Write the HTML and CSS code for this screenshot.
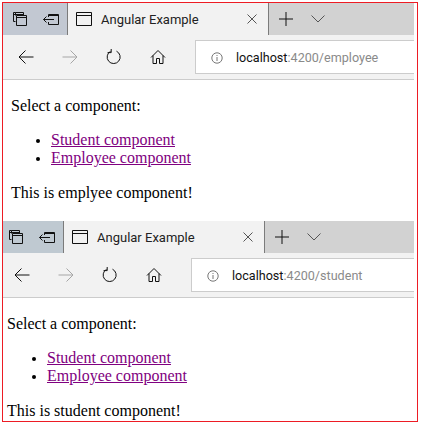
FILE: index.html
```html
<!DOCTYPE html>
<html lang="en">

<head>
    <meta charset="UTF-8">
    <title>Angular Example</title>
    <link rel="stylesheet" href="styles.css">
</head>

<body>
    <svg class="sprite">
        <symbol id="i-tabs" viewBox="0 0 16 16"><path d="M3.5 4.5V1.5H11.5V4.5M3.5 10.5H1.5V1.5H3.5M4.5 4.5H14.5V14.5H4.5ZM4.5 6.5H14.5M1.5 3.5H11.5"/></symbol>
        <symbol id="i-aside" viewBox="0 0 16 16"><path d="M5.5 6V3.5H15.5V13.5H5.5V11M5.5 4.5H15.5M0.5 8.5H11M3.5 5.5L0.5 8.5L3.5 11.5"/></symbol>
        <symbol id="i-page" viewBox="0 0 16 16"><path d="M0.5 1.5H15.5V14.5H0.5ZM0.5 4.5H15.5"/></symbol>
        <symbol id="i-close" viewBox="0 0 10 10"><path d="M0.5 0.5L9.5 9.5M9.5 0.5L0.5 9.5"/></symbol>
        <symbol id="i-plus" viewBox="0 0 14 14"><path d="M7 0V14M0 7H14"/></symbol>
        <symbol id="i-chevron" viewBox="0 0 14 8"><path d="M0.5 0.5L7 7L13.5 0.5"/></symbol>
        <symbol id="i-back" viewBox="0 0 16 16"><path d="M15.5 8H1M7.5 1.5L1 8L7.5 14.5"/></symbol>
        <symbol id="i-forward" viewBox="0 0 16 16"><path d="M0.5 8H15M8.5 1.5L15 8L8.5 14.5"/></symbol>
        <symbol id="i-refresh" viewBox="0 0 16 16"><path d="M10.5 2.2A6.5 6.5 0 1 1 4.6 2.3M5.2 0V3.6H1.6"/></symbol>
        <symbol id="i-home" viewBox="0 0 16 16"><path d="M1 8.5L8 1.5L15 8.5M3 6.5V14.5H6.5V9.5H9.5V14.5H13V6.5"/></symbol>
        <symbol id="i-info" viewBox="0 0 12 12"><circle cx="6" cy="6" r="5.2"/><path d="M6 5V9M6 3V4"/></symbol>
    </svg>

    <div class="frame">
        <div class="shot">
            <div class="tabstrip">
                <div class="side">
                    <svg class="icon"><use href="#i-tabs"></use></svg>
                    <svg class="icon"><use href="#i-aside"></use></svg>
                </div>
                <div class="tab">
                    <svg class="icon"><use href="#i-page"></use></svg>
                    <span class="tab-title">Angular Example</span>
                    <svg class="icon-close"><use href="#i-close"></use></svg>
                </div>
                <div class="tab-actions">
                    <svg class="icon-plus"><use href="#i-plus"></use></svg>
                    <svg class="icon-chevron"><use href="#i-chevron"></use></svg>
                </div>
            </div>
            <div class="toolbar">
                <div class="nav">
                    <svg class="icon"><use href="#i-back"></use></svg>
                    <svg class="icon disabled"><use href="#i-forward"></use></svg>
                    <svg class="icon"><use href="#i-refresh"></use></svg>
                    <svg class="icon"><use href="#i-home"></use></svg>
                </div>
                <div class="address">
                    <svg class="icon-info"><use href="#i-info"></use></svg>
                    <span class="url">localhost<span class="url-rest">:4200/employee</span></span>
                </div>
            </div>
            <div class="content">
                <p>Select a component:</p>
                <ul>
                    <li><a href="#">Student component</a></li>
                    <li><a href="#">Employee component</a></li>
                </ul>
                <p>This is emplyee component!</p>
            </div>
        </div>

        <div class="shot shot-second">
            <div class="tabstrip">
                <div class="side">
                    <svg class="icon"><use href="#i-tabs"></use></svg>
                    <svg class="icon"><use href="#i-aside"></use></svg>
                </div>
                <div class="tab">
                    <svg class="icon"><use href="#i-page"></use></svg>
                    <span class="tab-title">Angular Example</span>
                    <svg class="icon-close"><use href="#i-close"></use></svg>
                </div>
                <div class="tab-actions">
                    <svg class="icon-plus"><use href="#i-plus"></use></svg>
                    <svg class="icon-chevron"><use href="#i-chevron"></use></svg>
                </div>
            </div>
            <div class="toolbar">
                <div class="nav">
                    <svg class="icon"><use href="#i-back"></use></svg>
                    <svg class="icon disabled"><use href="#i-forward"></use></svg>
                    <svg class="icon"><use href="#i-refresh"></use></svg>
                    <svg class="icon"><use href="#i-home"></use></svg>
                </div>
                <div class="address">
                    <svg class="icon-info"><use href="#i-info"></use></svg>
                    <span class="url">localhost<span class="url-rest">:4200/student</span></span>
                </div>
            </div>
            <div class="content">
                <p>Select a component:</p>
                <ul>
                    <li><a href="#">Student component</a></li>
                    <li><a href="#">Employee component</a></li>
                </ul>
                <p>This is student component!</p>
            </div>
        </div>
    </div>
</body>

</html>
```

FILE: styles.css
```css
body {
    margin: 0;
    background: #fff;
}

.sprite {
    display: none;
}

.frame {
    box-sizing: border-box;
    width: 416px;
    height: 420px;
    margin: 2px 0 0 2px;
    border: 1.5px solid #ed1c24;
    overflow: hidden;
}

svg {
    flex: none;
    fill: none;
    stroke: #111;
    stroke-width: 1;
}

.icon {
    width: 16px;
    height: 16px;
}

.disabled {
    stroke: #a6a6a6;
}

.tabstrip {
    display: flex;
    width: 411px;
    height: 32px;
    background: #d2d2d2;
}

.side {
    box-sizing: border-box;
    display: flex;
    align-items: center;
    gap: 15px;
    width: 65px;
    padding-left: 9px;
    background: #c2c8d2;
    border-right: 1px solid #7b7b7b;
}

.tab {
    box-sizing: border-box;
    display: flex;
    align-items: center;
    width: 201px;
    padding: 0 11px 0 8px;
    background: #f2f2f2;
    border-right: 1px solid #7b7b7b;
}

.tab-title {
    flex: 1;
    margin-left: 9px;
    font: 13px Roboto, sans-serif;
    color: #222;
}

.icon-close {
    width: 10px;
    height: 10px;
    stroke: #555;
}

.tab-actions {
    display: flex;
    align-items: center;
    padding-left: 10px;
}

.icon-plus {
    width: 14px;
    height: 14px;
}

.icon-chevron {
    width: 14px;
    height: 8px;
    margin-left: 18px;
    stroke: #555;
}

.toolbar {
    box-sizing: border-box;
    display: flex;
    width: 411px;
    height: 45px;
    padding-top: 5px;
    background: #f2f2f2;
    border-bottom: 1px solid #cccccc;
}

.nav {
    box-sizing: border-box;
    display: flex;
    align-items: center;
    gap: 28px;
    width: 192px;
    height: 34px;
    padding-left: 15px;
}

.address {
    box-sizing: border-box;
    flex: 1;
    display: flex;
    align-items: center;
    height: 34px;
    padding-left: 15px;
    background: #fff;
    border: 1px solid #cccccc;
    border-right: 0;
}

.icon-info {
    width: 12px;
    height: 12px;
    margin-top: 2px;
    stroke: #777;
}

.url {
    margin-left: 13px;
    font: 12.6px Roboto, sans-serif;
    color: #111;
}

.url-rest {
    color: #8a8a8a;
}

.content {
    height: 141px;
    box-sizing: border-box;
    padding: 17px 0 0 8px;
    font: 16px/18px "Liberation Serif", serif;
    color: #000;
}

.content p {
    margin: 0;
}

.content ul {
    margin: 16px 0 17px;
    padding-left: 40px;
}

.content li::marker {
    font-size: 13px;
}

.content a {
    color: #800080;
}

/* second capture sits 4px further left than the first */
.shot-second .side {
    width: 61px;
    padding-left: 5px;
    background: #bfc9d1;
}

.shot-second .nav {
    width: 188px;
    padding-left: 11px;
}

.shot-second .content {
    height: 123px;
    padding-left: 4px;
}
```
